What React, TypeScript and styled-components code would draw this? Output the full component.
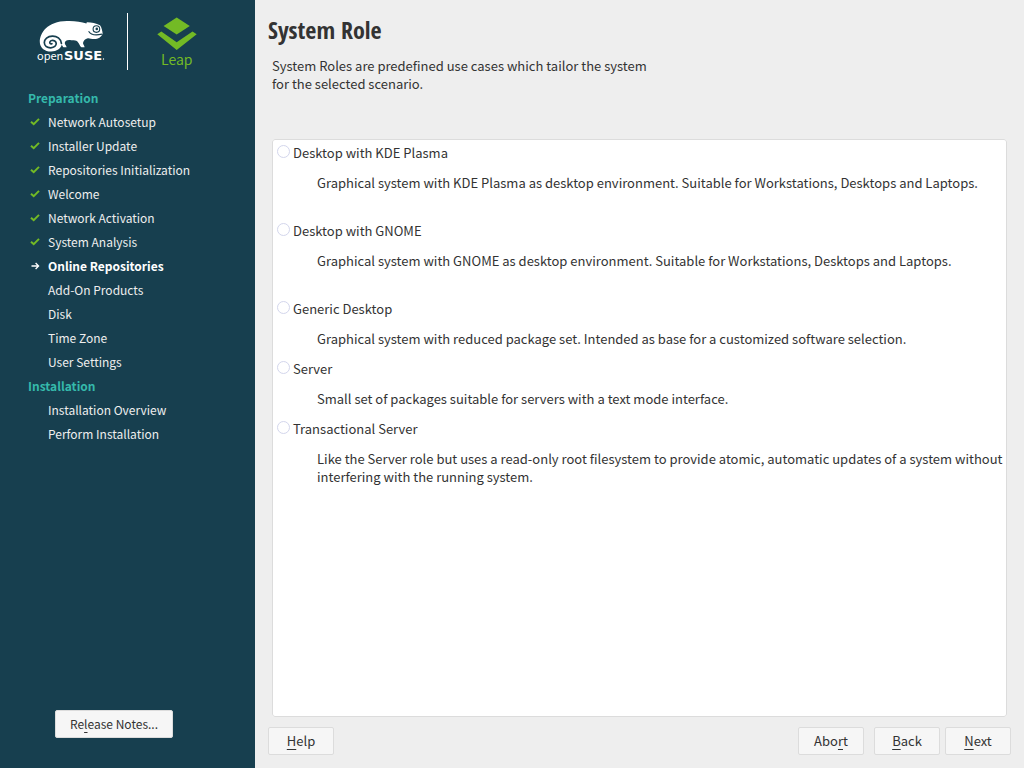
import React from "react";
import styled, { createGlobalStyle } from "styled-components";

const GlobalStyle = createGlobalStyle`
  *, *::before, *::after { box-sizing: border-box; }
  body {
    margin: 0;
    background: #eeeeee;
    color: #333333;
    font-family: "Noto Sans CJK SC", "Open Sans", sans-serif;
    font-size: 13px;
    line-height: 18px;
  }
`;

const Page = styled.div`
  display: flex;
  min-height: 100vh;
`;

const Sidebar = styled.aside`
  flex: none;
  display: flex;
  flex-direction: column;
  width: 255px;
  padding: 12px 27px 30px 28px;
  background: #173f4f;
  color: #eeeeee;
  font-size: 12px;
`;

const Brand = styled.svg`
  display: block;
  width: 172px;
  height: 60px;
`;

const LeapName = styled.text`
  fill: #73ba25;
  font-size: 14px;
`;

const OpenName = styled.text`
  fill: #ffffff;
  font-size: 11px;
`;

const SuseName = styled.text`
  fill: #ffffff;
  font-family: "DejaVu Sans", sans-serif;
  font-size: 13px;
  font-weight: bold;
`;

const Steps = styled.nav`
  margin-top: 14px;
`;

const StageTitle = styled.h2`
  margin: 0;
  color: #35b9ab;
  font-size: 12px;
  font-weight: bold;
  line-height: 24px;
`;

const StepList = styled.ol`
  margin: 0;
  padding: 0;
  list-style: none;
`;

const Step = styled.li<{ $current: boolean }>`
  display: flex;
  align-items: center;
  height: 24px;
  font-weight: ${(p) => (p.$current ? "bold" : "normal")};
  color: ${(p) => (p.$current ? "#ffffff" : "#eeeeee")};
`;

const Marker = styled.span`
  display: flex;
  width: 20px;
  padding-left: 2px;
`;

const Button = styled.button`
  min-width: 66px;
  height: 28px;
  padding: 0 12px;
  border: 1px solid #dcdcdc;
  border-radius: 2px;
  background: #f6f6f6;
  color: #333333;
  font: inherit;
  white-space: nowrap;
`;

const ReleaseButton = styled(Button)`
  align-self: center;
  width: 118px;
  margin-top: auto;
  margin-right: 28px;
`;

const Mnemonic = styled.span`
  text-decoration: underline;
  text-underline-offset: 3px;
  text-decoration-skip-ink: none;
`;

const Main = styled.main`
  flex: 1;
  display: flex;
  flex-direction: column;
  min-width: 0;
  padding: 14px 13px 13px;
`;

const Title = styled.h1`
  margin: 0;
  font-family: "Open Sans Condensed", "Roboto Condensed", sans-serif;
  font-size: 24px;
  font-weight: bold;
  line-height: 32px;
`;

const Intro = styled.p`
  margin: 11px 4px 46px;
`;

const RolePanel = styled.fieldset`
  flex: 1;
  display: flex;
  flex-direction: column;
  gap: 12px;
  min-width: 0;
  margin: 0 4px;
  padding: 4px 0 12px 4px;
  border: 1px solid #dcdcdc;
  border-radius: 3px;
  background: #ffffff;
`;

const Role = styled.div<{ $spacious: boolean }>`
  padding-bottom: ${(p) => (p.$spacious ? "18px" : "0")};
`;

const RoleLabel = styled.label`
  display: flex;
  gap: 3px;
`;

const Radio = styled.input`
  appearance: none;
  flex: none;
  width: 13px;
  height: 13px;
  margin: 1px 0 0;
  border: 1px solid #d3d6ec;
  border-radius: 50%;
  background: #ffffff;

  &:checked {
    box-shadow: inset 0 0 0 3px #ffffff;
    background: #35b9ab;
  }
`;

const RoleText = styled.p`
  margin: 12px 0 0 40px;
`;

const Actions = styled.footer`
  display: flex;
  margin-top: 10px;
`;

const ActionGroup = styled.div`
  display: flex;
  gap: 5px;
  margin-left: auto;
`;

const AbortButton = styled(Button)`
  margin-right: 5px;
`;

type StepState = "done" | "current" | "todo";

const stages: { title: string; steps: [string, StepState][] }[] = [
  {
    title: "Preparation",
    steps: [
      ["Network Autosetup", "done"],
      ["Installer Update", "done"],
      ["Repositories Initialization", "done"],
      ["Welcome", "done"],
      ["Network Activation", "done"],
      ["System Analysis", "done"],
      ["Online Repositories", "current"],
      ["Add-On Products", "todo"],
      ["Disk", "todo"],
      ["Time Zone", "todo"],
      ["User Settings", "todo"],
    ],
  },
  {
    title: "Installation",
    steps: [
      ["Installation Overview", "todo"],
      ["Perform Installation", "todo"],
    ],
  },
];

const roles = [
  {
    id: "kde",
    name: "Desktop with KDE Plasma",
    text: "Graphical system with KDE Plasma as desktop environment. Suitable for Workstations, Desktops and Laptops.",
    spacious: true,
  },
  {
    id: "gnome",
    name: "Desktop with GNOME",
    text: "Graphical system with GNOME as desktop environment. Suitable for Workstations, Desktops and Laptops.",
    spacious: true,
  },
  {
    id: "generic",
    name: "Generic Desktop",
    text: "Graphical system with reduced package set. Intended as base for a customized software selection.",
    spacious: false,
  },
  {
    id: "server",
    name: "Server",
    text: "Small set of packages suitable for servers with a text mode interface.",
    spacious: false,
  },
  {
    id: "transactional",
    name: "Transactional Server",
    text: "Like the Server role but uses a read-only root filesystem to provide atomic, automatic updates of a system without interfering with the running system.",
    spacious: false,
  },
];

function StepIcon({ state }: { state: StepState }) {
  if (state === "done") {
    return (
      <svg width="10" height="10" viewBox="0 0 10 10" fill="none" stroke="#73ba25" strokeWidth="2" aria-hidden="true">
        <path d="M1 4.7 3.7 7.2 9 1.9" />
      </svg>
    );
  }
  if (state === "current") {
    return (
      <svg width="10" height="10" viewBox="0 0 10 10" fill="none" stroke="#ffffff" strokeWidth="1.3" aria-hidden="true">
        <path d="M1.5 5H8.5M5.6 2 8.6 5 5.6 8" />
      </svg>
    );
  }
  return null;
}

function Chameleon() {
  return (
    <g>
      <path
        fill="#ffffff"
        d="M39.8 42C40 33 47 21.3 67 21C75 20.8 81 21.6 86.4 23.6L86.8 22.3C91 22.2 96 23.2 100 25.2C101.6 27.5 102.4 30.5 102.6 33.6C101.5 37.4 98 39.2 94 39.1C91.5 39 89.5 38 87.8 38.2C85 38.6 83.4 41 83 43C83 44.6 84.4 45.6 84.6 47.2H81.4C79.6 46.4 79.6 43.4 77.4 41.4C75.2 39.6 72 40.4 69.4 40.1C66.6 40 65 41.2 64.8 42.8C64.6 44.6 66.4 45.4 66.6 47.2H63.4C62.6 46.4 62.2 45.6 61.8 44.6C61 48.6 56.6 51.6 51.2 51.6C44.6 51.6 39.8 47.6 39.8 42Z"
      />
      <path
        fill="none"
        stroke="#173f4f"
        strokeWidth="1.7"
        strokeLinecap="round"
        d="M61.4 43.4C60.8 38.8 57 36 52.4 36.1C47.6 36.2 44.3 39 44.3 42.6C44.4 46 47.3 47.9 50.8 47.8C54.2 47.7 56.4 45.8 56.2 43.4C56 41.2 54 40.2 51.8 40.5C50.2 40.8 49.4 42.2 50 43.2C50.4 43.8 51.2 44 51.9 43.7"
      />
      <path fill="none" stroke="#173f4f" strokeWidth="1.1" d="M88.6 31.2C90.6 34.6 94.6 35.8 102 34.1" />
      <circle cx="96.4" cy="29.1" r="3.3" fill="#ffffff" stroke="#173f4f" strokeWidth="1.1" />
      <circle cx="96.8" cy="28.9" r="1.3" fill="#173f4f" />
    </g>
  );
}

function Logo() {
  return (
    <Brand viewBox="28 12 172 60" role="img" aria-label="openSUSE Leap">
      <Chameleon />
      <OpenName x="37" y="60">open</OpenName>
      <SuseName x="64" y="60">SUSE</SuseName>
      <circle cx="103.5" cy="59" r="0.7" fill="#ffffff" />
      <rect x="127" y="13" width="1" height="57" fill="#ffffff" />
      <path d="M176.7 17.5 189.8 26 176.7 34.5 163.6 26Z" fill="#73ba25" />
      <path d="M161.3 31.5 176.7 42.3 192.5 31.5 196.7 34.2 176.7 50 157.3 34.2Z" fill="#73ba25" />
      <LeapName x="161" y="65">Leap</LeapName>
    </Brand>
  );
}

export default function App() {
  return (
    <>
      <GlobalStyle />
      <Page>
        <Sidebar>
          <Logo />
          <Steps aria-label="Installation steps">
            {stages.map((stage) => (
              <React.Fragment key={stage.title}>
                <StageTitle>{stage.title}</StageTitle>
                <StepList>
                  {stage.steps.map(([name, state]) => (
                    <Step key={name} $current={state === "current"}>
                      <Marker>
                        <StepIcon state={state} />
                      </Marker>
                      {name}
                    </Step>
                  ))}
                </StepList>
              </React.Fragment>
            ))}
          </Steps>
          <ReleaseButton type="button">
            Re<Mnemonic>l</Mnemonic>ease Notes...
          </ReleaseButton>
        </Sidebar>
        <Main>
          <Title>System Role</Title>
          <Intro>
            System Roles are predefined use cases which tailor the system
            <br />
            for the selected scenario.
          </Intro>
          <RolePanel aria-label="System Role">
            {roles.map((role) => (
              <Role key={role.id} $spacious={role.spacious}>
                <RoleLabel htmlFor={role.id}>
                  <Radio type="radio" name="role" id={role.id} />
                  {role.name}
                </RoleLabel>
                <RoleText>{role.text}</RoleText>
              </Role>
            ))}
          </RolePanel>
          <Actions>
            <Button type="button">
              <Mnemonic>H</Mnemonic>elp
            </Button>
            <ActionGroup>
              <AbortButton type="button">
                Abo<Mnemonic>r</Mnemonic>t
              </AbortButton>
              <Button type="button">
                <Mnemonic>B</Mnemonic>ack
              </Button>
              <Button type="button">
                <Mnemonic>N</Mnemonic>ext
              </Button>
            </ActionGroup>
          </Actions>
        </Main>
      </Page>
    </>
  );
}
